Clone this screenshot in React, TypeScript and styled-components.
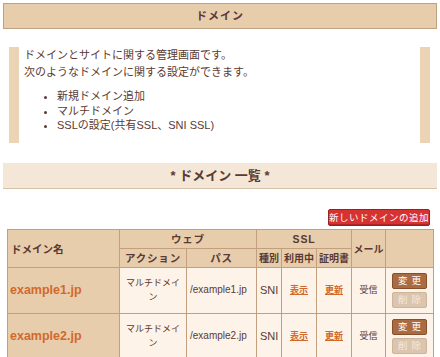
import styled, { createGlobalStyle } from "styled-components";

const GlobalStyle = createGlobalStyle`
  body {
    margin: 0;
    background: #ffffff;
    font-family: "Liberation Sans", "Noto Sans CJK JP", sans-serif;
    color: #5b3a32;
  }
`;

const Page = styled.div`
  padding: 3px;
`;

const TitleBar = styled.h1`
  margin: 0;
  height: 26px;
  box-sizing: border-box;
  border: 1px solid #bfa07f;
  background: #e7cdac;
  font-size: 11px;
  font-weight: bold;
  line-height: 24px;
  text-align: center;
  letter-spacing: 1px;
`;

const InfoBox = styled.div`
  margin: 18px 7px 0 6px;
  border-left: 10px solid #ebd3b5;
  border-right: 10px solid #ebd3b5;
  padding: 0 5px 10px 5px;
  font-size: 11px;
`;

const Lead = styled.p`
  margin: 0;
  line-height: 16.5px;
`;

const Bullets = styled.ul`
  margin: 9px 0 0;
  padding-left: 33px;
  line-height: 14.5px;
`;

const SectionBar = styled.h2`
  margin: 20px 0 0;
  height: 26px;
  box-sizing: border-box;
  background: #f4e7d7;
  border-bottom: 1px solid #d7c1a8;
  font-size: 13px;
  font-weight: bold;
  line-height: 26px;
  text-align: center;
`;

const Toolbar = styled.div`
  display: flex;
  justify-content: flex-end;
  margin: 20px 7px 3px 0;
`;

const AddButton = styled.button`
  height: 17px;
  width: 102px;
  padding: 0;
  border: 1px solid #9e1f1f;
  border-radius: 2px;
  background: #d63232;
  color: #ffffff;
  font-family: inherit;
  font-size: 9.5px;
  letter-spacing: 0.5px;
  line-height: 15px;
  box-shadow: inset 0 -1px 0 #b02424;
`;

const Table = styled.table`
  margin: 0 4px;
  width: 426px;
  border-collapse: collapse;
  table-layout: fixed;
`;

const Th = styled.th<{ $left?: boolean }>`
  height: 19px;
  padding: 0 3px;
  box-sizing: border-box;
  background: #e7cdac;
  border: 1px solid #c19f7f;
  font-size: 10.5px;
  font-weight: bold;
  text-align: ${(p) => (p.$left ? "left" : "center")};
  letter-spacing: ${(p) => (p.$left ? "0" : "0.8px")};
  white-space: nowrap;
  overflow: hidden;
`;

const SmallTh = styled(Th)`
  font-size: 10px;
  letter-spacing: 0;
  padding: 0;
`;

const NameCell = styled.td`
  height: 45px;
  padding: 0 2px;
  background: #e7cdac;
  border: 1px solid #c19f7f;
  color: #d2692a;
  font-size: 12.5px;
  font-weight: bold;
`;

const Td = styled.td<{ $left?: boolean; $size?: number }>`
  padding: 0 3px;
  background: #fdf3e8;
  border: 1px solid #c19f7f;
  font-size: ${(p) => p.$size ?? 9}px;
  text-align: ${(p) => (p.$left ? "left" : "center")};
  line-height: 14px;
`;

const TextLink = styled.a`
  color: #d2692a;
  font-size: 9px;
  font-weight: bold;
  text-decoration: underline;
`;

const ButtonStack = styled.div`
  display: flex;
  flex-direction: column;
  align-items: center;
  gap: 3px;
`;

const SmallButton = styled.button<{ $disabled?: boolean }>`
  width: 35px;
  height: 16px;
  padding: 0;
  border: 1px solid ${(p) => (p.$disabled ? "#cdb49b" : "#86502c")};
  border-radius: 2px;
  background: ${(p) => (p.$disabled ? "#dcc5ae" : "#aa6b42")};
  color: ${(p) => (p.$disabled ? "#f4e9de" : "#ffffff")};
  font-family: inherit;
  font-size: 9.5px;
  letter-spacing: 4px;
  text-indent: 4px;
  line-height: 14px;
`;

const domains = [
  { name: "example1.jp", path: "/example1.jp" },
  { name: "example2.jp", path: "/example2.jp" },
];

export default function App() {
  return (
    <Page>
      <GlobalStyle />
      <TitleBar>ドメイン</TitleBar>
      <InfoBox>
        <Lead>
          ドメインとサイトに関する管理画面です。
          <br />
          次のようなドメインに関する設定ができます。
        </Lead>
        <Bullets>
          <li>新規ドメイン追加</li>
          <li>マルチドメイン</li>
          <li>SSLの設定(共有SSL、SNI SSL)</li>
        </Bullets>
      </InfoBox>
      <SectionBar>* ドメイン 一覧 *</SectionBar>
      <Toolbar>
        <AddButton>新しいドメインの追加</AddButton>
      </Toolbar>
      <Table>
        <colgroup>
          <col style={{ width: 112 }} />
          <col style={{ width: 67 }} />
          <col style={{ width: 70 }} />
          <col style={{ width: 25 }} />
          <col style={{ width: 35 }} />
          <col style={{ width: 35 }} />
          <col style={{ width: 34 }} />
          <col style={{ width: 48 }} />
        </colgroup>
        <thead>
          <tr>
            <Th $left rowSpan={2}>ドメイン名</Th>
            <Th colSpan={2}>ウェブ</Th>
            <Th colSpan={3}>SSL</Th>
            <SmallTh rowSpan={2}>メール</SmallTh>
            <Th rowSpan={2}></Th>
          </tr>
          <tr>
            <Th>アクション</Th>
            <Th>パス</Th>
            <SmallTh>種別</SmallTh>
            <SmallTh>利用中</SmallTh>
            <SmallTh>証明書</SmallTh>
          </tr>
        </thead>
        <tbody>
          {domains.map((d) => (
            <tr key={d.name}>
              <NameCell>{d.name}</NameCell>
              <Td>マルチドメイン</Td>
              <Td $left $size={10}>{d.path}</Td>
              <Td $size={11}>SNI</Td>
              <Td>
                <TextLink>表示</TextLink>
              </Td>
              <Td>
                <TextLink>更新</TextLink>
              </Td>
              <Td>受信</Td>
              <Td>
                <ButtonStack>
                  <SmallButton>変更</SmallButton>
                  <SmallButton $disabled>削除</SmallButton>
                </ButtonStack>
              </Td>
            </tr>
          ))}
        </tbody>
      </Table>
    </Page>
  );
}
